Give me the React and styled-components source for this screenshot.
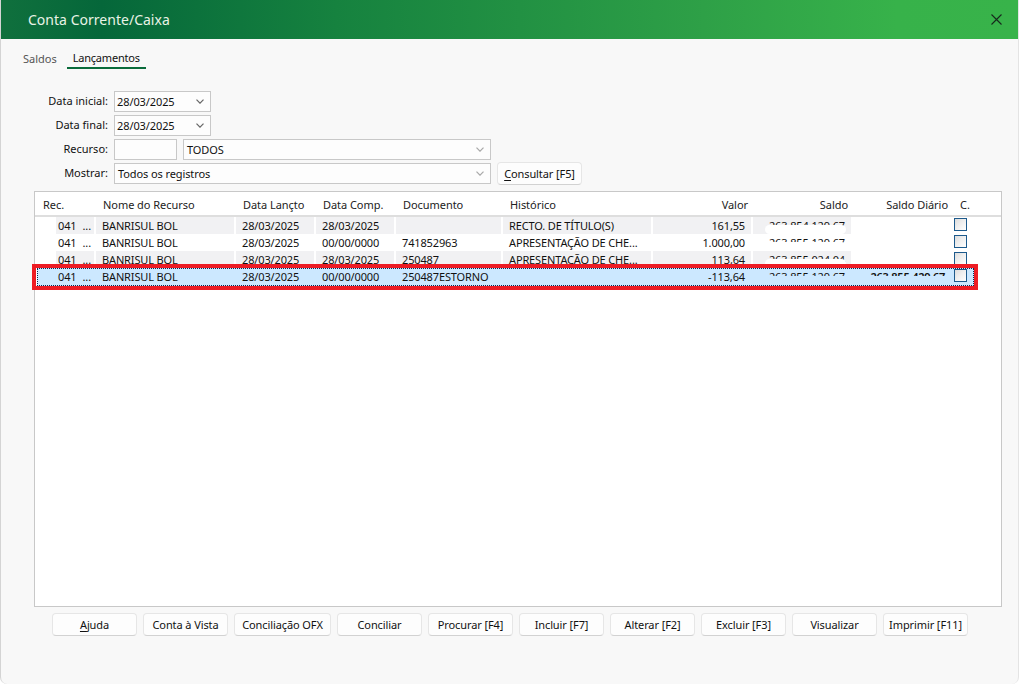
import React from "react";
import styled, { createGlobalStyle } from "styled-components";

const Global = createGlobalStyle`
  html, body { margin: 0; padding: 0; background: #fff; }
  body { font-family: "Noto Sans", "Open Sans", sans-serif; font-size: 11px; color: #111; }
  * { box-sizing: border-box; }
`;

const COLS = "19px 38px 138px 78px 78px 105px 148px 98px 98px 98px 1fr";

const Window = styled.div`
  width: 1019px; height: 684px; display: flex; flex-direction: column;
  background: #f8f8f8; border-left: 1px solid #d4d4d4; border-right: 1px solid #e4e4e4;
  border-radius: 0 0 7px 7px; overflow: hidden;
`;
const TitleBar = styled.header`
  height: 39px; margin: 0 -1px; flex: none; display: flex; align-items: center; justify-content: space-between;
  padding: 0 17px 0 28px;
  background: linear-gradient(90deg, #10703d 0%, #05673a 10%, #16823f 33%, #2ea047 69%, #37b24a 88%, #38b34a 100%);
`;
const Title = styled.h1`
  margin: 0; font-size: 14px; font-weight: 400; color: #e9f3e6; letter-spacing: 0.02px;
`;
const Tabs = styled.nav`
  height: 30px; flex: none; display: flex; align-items: flex-start; padding: 11px 0 0 22px;
`;
const Tab = styled.div`
  height: 19px; line-height: ${p => (p.$active ? "16px" : "18px")}; font-size: 11px;
  color: ${p => (p.$active ? "#111" : "#555")};
  margin-left: ${p => (p.$active ? "10px" : "0")};
  width: ${p => (p.$active ? "79px" : "auto")}; text-align: center;
  letter-spacing: ${p => (p.$active ? "-0.2px" : "0")};
  border-bottom: ${p => (p.$active ? "2px solid #0a6b3b" : "none")};
`;
const Form = styled.section`
  flex: none; display: flex; flex-direction: column; gap: 3px; margin-top: 22px; height: 93px;
`;
const FormRow = styled.div`display: flex; align-items: flex-start; height: 21px;`;
const Label = styled.label`
  width: 107px; flex: none; text-align: right; line-height: 20px; color: #111;
`;
const Field = styled.div`
  width: ${p => p.$w}px; height: 21px; margin-left: ${p => p.$gap ?? 6}px; flex: none;
  display: flex; align-items: center; justify-content: space-between;
  padding: 0 5px 0 ${p => p.$pl ?? 2}px; background: #fdfdfd; border: 1px solid #c8c8c8;
  line-height: 19px; color: #111; letter-spacing: -0.1px;
`;
const Chevron = ({ color, mr }) => (
  <svg width="8" height="5" viewBox="0 0 8 5" style={{ marginRight: mr }}>
    <path d="M0.5 0.7 L4 4.2 L7.5 0.7" fill="none" stroke={color} strokeWidth="1.2" />
  </svg>
);
const Button = styled.button`
  width: ${p => p.$w ?? 85}px; height: 23px; flex: none; padding: 0; font: inherit; color: #111;
  margin: ${p => p.$mt ?? 0}px 0 0 ${p => p.$ml ?? 0}px; letter-spacing: -0.1px;
  background: #fdfdfd; border: 1px solid #e6e6e6; border-bottom-color: #d2d2d2; border-radius: 4px;
  u { text-underline-offset: 2px; }
`;
const Panel = styled.section`
  width: 968px; height: 416px; margin: 7px 0 0 33px; flex: none; background: #fff;
  border: 1px solid #c8c8c8; position: relative;
`;
const HeaderRow = styled.div`
  display: grid; grid-template-columns: ${COLS}; column-gap: 2px; height: 25px;
  border-bottom: 2px solid #dedede; align-items: center; padding-top: 2px;
`;
const HeadCell = styled.div`
  grid-column: ${p => p.$span ?? "auto"};
  white-space: nowrap; color: #222; letter-spacing: -0.05px;
  text-align: ${p => (p.$right ? "right" : "left")};
  padding: ${p => (p.$right ? "0 3px 0 0" : `0 0 0 ${p.$first ? 8 : 7}px`)};
`;
const Rows = styled.div`display: flex; flex-direction: column;`;
const Row = styled.div`
  display: grid; grid-template-columns: ${COLS}; column-gap: 2px; height: 17px; line-height: 17px;
  position: relative;
  ${p => p.$selected && `
    &::before {
      content: ""; position: absolute; left: 2px; right: 27px; top: 0; bottom: -1px;
      background: #cce8ff; border: 1px dotted #0a2a55;
    }
    &::after {
      content: ""; position: absolute; left: -3px; right: 23px; top: -4px; bottom: -5px;
      border: 4px solid #ed1c24; z-index: 3;
    }
  `}
`;
const Cell = styled.div`
  position: relative; overflow: hidden; white-space: nowrap; height: 17px; z-index: 1;
  background: ${p => (p.$shade ? "#f1f1f3" : "transparent")};
  text-align: ${p => (p.$right ? "right" : "left")};
  padding: ${p => (p.$right ? "0 6px 0 0" : "0 0 0 6px")};
  color: #111; letter-spacing: ${p => (p.$bold ? "-0.28px" : "-0.14px")};
  font-weight: ${p => (p.$bold ? 600 : 400)};
`;
const RecCell = styled(Cell)`
  display: flex; justify-content: space-between; padding: 0 3px 0 2px;
`;
const Mask = styled.span`
  position: absolute; left: ${p => (p.$selected ? 0 : 12)}px; right: ${p => (p.$selected ? 0 : 5)}px;
  top: 8px; height: 9px;
  background: ${p => (p.$selected ? "#cce8ff" : "#fff")};
  border-radius: 5px;
`;
const CheckCell = styled.div`position: relative; z-index: 1; padding: 1px 0 0 1px;`;
const Check = styled.span`
  display: block; width: 13px; height: 13px; border: 1px solid #1d5a8c;
  background: linear-gradient(135deg, #dcdcdc 0%, #eeeeee 45%, #ffffff 100%);
`;
const Footer = styled.footer`
  flex: none; display: flex; gap: 6px; margin: 6px 0 0 51px;
`;

const rows = [
  { hist: "RECTO. DE TÍTULO(S)", lanc: "28/03/2025", comp: "28/03/2025", doc: "", valor: "161,55", saldo: "263.854.129,67", shade: true },
  { hist: "APRESENTAÇÃO DE CHE...", lanc: "28/03/2025", comp: "00/00/0000", doc: "741852963", valor: "1.000,00", saldo: "263.855.129,67" },
  { hist: "APRESENTAÇÃO DE CHE...", lanc: "28/03/2025", comp: "28/03/2025", doc: "250487", valor: "113,64", saldo: "263.855.024,04", shade: true },
  { hist: "", lanc: "28/03/2025", comp: "00/00/0000", doc: "250487ESTORNO", valor: "-113,64", saldo: "263.855.129,67", diario: "263.855.429,67", selected: true },
];

const buttons = [
  [<><u>A</u>juda</>], ["Conta à Vista"], ["Conciliação OFX", 97], ["Conciliar"], ["Procurar [F4]"],
  ["Incluir [F7]"], ["Alterar [F2]"], ["Excluir [F3]"], ["Visualizar"], ["Imprimir [F11]"],
];

export default function App() {
  return (
    <Window>
      <Global />
      <TitleBar>
        <Title>Conta Corrente/Caixa</Title>
        <svg width="11" height="11" viewBox="0 0 11 11">
          <path d="M0.5 0.5 L10.5 10.5 M10.5 0.5 L0.5 10.5" stroke="#17281d" strokeWidth="1.1" />
        </svg>
      </TitleBar>
      <Tabs>
        <Tab>Saldos</Tab>
        <Tab $active>Lançamentos</Tab>
      </Tabs>
      <Form>
        <FormRow>
          <Label>Data inicial:</Label>
          <Field $w={97}>28/03/2025<Chevron color="#666" mr="1px" /></Field>
        </FormRow>
        <FormRow>
          <Label>Data final:</Label>
          <Field $w={97}>28/03/2025<Chevron color="#666" mr="1px" /></Field>
        </FormRow>
        <FormRow>
          <Label>Recurso:</Label>
          <Field $w={63} />
          <Field $w={308} $pl={3}>TODOS<Chevron color="#a8a8a8" mr="1px" /></Field>
        </FormRow>
        <FormRow>
          <Label>Mostrar:</Label>
          <Field $w={377} $pl={3}>Todos os registros<Chevron color="#a8a8a8" mr="1px" /></Field>
          <Button $w={85} $ml={6} $mt={-1}><u>C</u>onsultar [F5]</Button>
        </FormRow>
      </Form>
      <Panel>
        <HeaderRow>
          <HeadCell $span="1 / span 2" $first>Rec.</HeadCell>
          <HeadCell>Nome do Recurso</HeadCell>
          <HeadCell>Data Lançto</HeadCell>
          <HeadCell>Data Comp.</HeadCell>
          <HeadCell>Documento</HeadCell>
          <HeadCell>Histórico</HeadCell>
          <HeadCell $right>Valor</HeadCell>
          <HeadCell $right>Saldo</HeadCell>
          <HeadCell $right>Saldo Diário</HeadCell>
          <HeadCell>C.</HeadCell>
        </HeaderRow>
        <Rows>
          {rows.map((r, i) => (
            <Row key={i} $selected={r.selected}>
              <div />
              <RecCell $shade={r.shade}><span>041</span><span>...</span></RecCell>
              <Cell $shade={r.shade}>BANRISUL BOL</Cell>
              <Cell $shade={r.shade}>{r.lanc}</Cell>
              <Cell $shade={r.shade}>{r.comp}</Cell>
              <Cell $shade={r.shade}>{r.doc}</Cell>
              <Cell $shade={r.shade}>{r.hist}</Cell>
              <Cell $shade={r.shade} $right>{r.valor}</Cell>
              <Cell $shade={r.shade} $right>{r.saldo}<Mask $selected={r.selected} /></Cell>
              <Cell $right $bold>{r.diario}{r.diario && <Mask $selected />}</Cell>
              <CheckCell><Check /></CheckCell>
            </Row>
          ))}
        </Rows>
      </Panel>
      <Footer>
        {buttons.map(([label, w], i) => <Button key={i} $w={w}>{label}</Button>)}
      </Footer>
    </Window>
  );
}
